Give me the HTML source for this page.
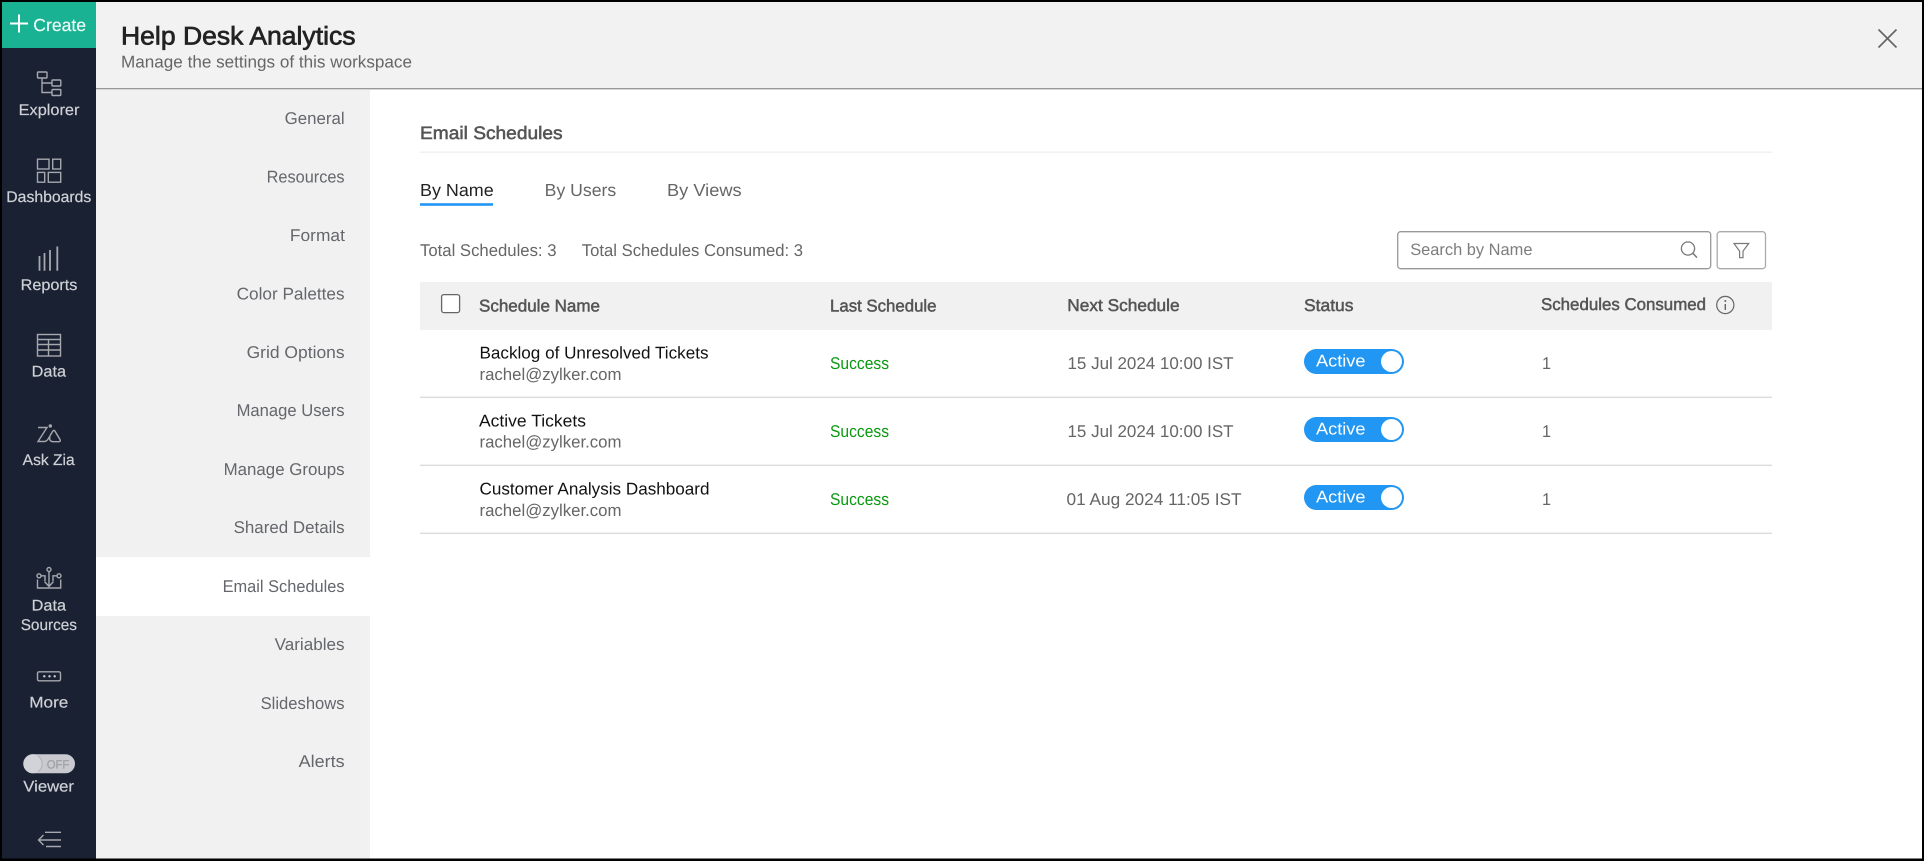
<!DOCTYPE html>
<html lang="en">
<head>
<meta charset="utf-8">
<title>Help Desk Analytics</title>
<style>
html,body{margin:0;padding:0;width:1924px;height:861px;overflow:hidden;background:#000}
svg{display:block;position:absolute;left:0;top:0}
text{font-family:"Liberation Sans",Arial,sans-serif;text-rendering:geometricPrecision;white-space:pre}
.side{font-size:15.5px;fill:#cfd1d5;stroke:#cfd1d5;stroke-width:.2px}
.nav{font-size:17px;fill:#65676c;transform:translate(.6px,-.9px)}
.tx{font-size:17px;fill:#666;transform:translateY(-.9px)}
.hd{font-size:17px;fill:#555;stroke:#555;stroke-width:.5px;transform:translateY(-.7px)}
.nm{font-size:17px;fill:#111;transform:translateY(-.9px)}
.ok{font-size:17px;fill:#0a9a12;transform:translateY(-.9px)}
.ic{fill:none;stroke:#a6a8ae;stroke-width:1.4}
</style>
</head>
<body>
<svg width="1924" height="861" viewBox="0 0 1924 861" xmlns="http://www.w3.org/2000/svg">
  <rect x="0" y="0" width="1924" height="861" fill="#000"/>
  <rect x="2" y="2" width="1920" height="856.5" fill="#fff"/>

  <!-- header -->
  <rect x="96" y="2" width="1826" height="86" fill="#f2f2f2"/>
  <rect x="96" y="88" width="1826" height="1.4" fill="#999"/>
  <text x="121" y="44.5" font-size="25.5" fill="#222" stroke="#222" stroke-width=".7" textLength="234.5" lengthAdjust="spacingAndGlyphs">Help Desk Analytics</text>
  <text x="121" y="67.6" font-size="17" fill="#666" textLength="291" lengthAdjust="spacingAndGlyphs">Manage the settings of this workspace</text>
  <path d="M1878.5 29.5L1896.5 47.5M1896.5 29.5L1878.5 47.5" fill="none" stroke="#666" stroke-width="1.7"/>

  <!-- sidebar -->
  <rect x="2" y="2" width="94" height="856.5" fill="#1a2133"/>
  <rect x="2" y="2" width="94" height="46" fill="#19b394"/>
  <path d="M19 14.5V32.5M10 23.5H28" stroke="#fff" stroke-width="2" fill="none"/>
  <text x="33.3" y="31" font-size="17.5" fill="#f2fbf8" stroke="#f2fbf8" stroke-width=".15" textLength="52.7" lengthAdjust="spacingAndGlyphs">Create</text>

  <g class="ic">
    <!-- explorer -->
    <rect x="37.5" y="72" width="9.5" height="6" rx=".8"/>
    <rect x="52" y="80" width="8.8" height="6" rx=".8"/>
    <rect x="52" y="89.5" width="8.8" height="6" rx=".8"/>
    <path d="M42 78V92.5H52M42 83H52"/>
    <!-- dashboards -->
    <rect x="37.5" y="159.2" width="11.5" height="9.8"/>
    <rect x="52.7" y="159.2" width="8" height="9.8"/>
    <rect x="37.5" y="172.4" width="7.2" height="9.8"/>
    <rect x="48.3" y="172.4" width="12.4" height="9.8"/>
    <!-- reports -->
    <path stroke-width="1.8" d="M39.5 270.7V256M44.5 270.7V253M50 270.7V250M57.3 270.7V246.5"/>
    <!-- data -->
    <rect x="37.5" y="334.5" width="23" height="21.5"/>
    <path d="M37.5 339.5H60.5M37.5 344.5H60.5M37.5 350H60.5M48.5 339.5V356"/>
    <!-- zia -->
    <path d="M38 427.5H47L38 441.5H44.5C46.5 441.5 47.5 440 48.5 438.5L52.5 431.5C53.5 430 54.5 430 55.2 431.5L60 439.5C60.8 441 60 441.7 59 441.7H53C50 441.7 49 439 50 437"/>
    <circle cx="50.3" cy="426" r="1" fill="#a6a8ae"/>
    <!-- data sources -->
    <path d="M37.5 579.5V588H60.7V579.5"/>
    <circle cx="49" cy="569.5" r="2"/>
    <path d="M49 571.5V586.5M44.5 581.5L49 586.5L53.5 581.5"/>
    <circle cx="39" cy="575.8" r="2"/>
    <path d="M41 575.8H45V581"/>
    <circle cx="59" cy="575.8" r="2"/>
    <path d="M57 575.8H53V581"/>
    <!-- more -->
    <rect x="37.5" y="671.8" width="23" height="9" rx="1.5"/>
    <!-- collapse -->
    <path d="M45 832.3H61M38.5 840H61M46 846.5H61M43.5 835L38.5 840L43.5 845"/>
  </g>
  <circle cx="44.3" cy="676.3" r="1.2" fill="#d0d2d6"/>
  <circle cx="49.5" cy="676.3" r="1.2" fill="#d0d2d6"/>
  <circle cx="54.7" cy="676.3" r="1.2" fill="#d0d2d6"/>

  <text class="side" x="18.7" y="115" textLength="60.7" lengthAdjust="spacingAndGlyphs">Explorer</text>
  <text class="side" x="6.3" y="202" textLength="85" lengthAdjust="spacingAndGlyphs">Dashboards</text>
  <text class="side" x="20.7" y="290" textLength="56.7" lengthAdjust="spacingAndGlyphs">Reports</text>
  <text class="side" x="31.7" y="376.5" textLength="34.3" lengthAdjust="spacingAndGlyphs">Data</text>
  <text class="side" x="22.7" y="465" textLength="52" lengthAdjust="spacingAndGlyphs">Ask Zia</text>
  <text class="side" x="31.7" y="610.6" textLength="34.3" lengthAdjust="spacingAndGlyphs">Data</text>
  <text class="side" x="20.7" y="630" textLength="56.3" lengthAdjust="spacingAndGlyphs">Sources</text>
  <text class="side" x="29.3" y="707.6" textLength="39" lengthAdjust="spacingAndGlyphs">More</text>
  <text class="side" x="23.3" y="791.6" textLength="50.7" lengthAdjust="spacingAndGlyphs">Viewer</text>

  <!-- viewer toggle -->
  <rect x="23.3" y="754.3" width="51.7" height="19" rx="9.5" fill="#c8cacf"/>
  <circle cx="32.8" cy="763.8" r="9.5" fill="#d2d3d8"/>
  <path d="M38 756A9.5 9.5 0 0 1 38 771.7" fill="none" stroke="#aeb0b7" stroke-width="1"/>
  <text x="46.7" y="768.3" font-size="12" fill="#9c9ea4" stroke="#9c9ea4" stroke-width=".2" textLength="22.6" lengthAdjust="spacingAndGlyphs">OFF</text>

  <!-- settings nav -->
  <rect x="96" y="89.4" width="274" height="769" fill="#f1f1f1"/>
  <rect x="96" y="557" width="274" height="59" fill="#fff"/>
  <text class="nav" x="284" y="125" textLength="60" lengthAdjust="spacingAndGlyphs">General</text>
  <text class="nav" x="266" y="183.5" textLength="78" lengthAdjust="spacingAndGlyphs">Resources</text>
  <text class="nav" x="289.3" y="242" textLength="55" lengthAdjust="spacingAndGlyphs">Format</text>
  <text class="nav" x="236" y="300.5" textLength="108" lengthAdjust="spacingAndGlyphs">Color Palettes</text>
  <text class="nav" x="246" y="359" textLength="98" lengthAdjust="spacingAndGlyphs">Grid Options</text>
  <text class="nav" x="236" y="417" textLength="108" lengthAdjust="spacingAndGlyphs">Manage Users</text>
  <text class="nav" x="223" y="476" textLength="121" lengthAdjust="spacingAndGlyphs">Manage Groups</text>
  <text class="nav" x="233" y="534" textLength="111" lengthAdjust="spacingAndGlyphs">Shared Details</text>
  <text class="nav" x="222" y="593" textLength="122" lengthAdjust="spacingAndGlyphs">Email Schedules</text>
  <text class="nav" x="274" y="651" textLength="70" lengthAdjust="spacingAndGlyphs">Variables</text>
  <text class="nav" x="260" y="710" textLength="84" lengthAdjust="spacingAndGlyphs">Slideshows</text>
  <text class="nav" x="298" y="768" textLength="46" lengthAdjust="spacingAndGlyphs">Alerts</text>

  <!-- content heading -->
  <text x="420" y="139" font-size="18" fill="#555" stroke="#555" stroke-width=".55" textLength="142.6" lengthAdjust="spacingAndGlyphs">Email Schedules</text>
  <rect x="420" y="151.5" width="1352" height="1.5" fill="#f2f2f2"/>

  <!-- tabs -->
  <text x="420" y="196" font-size="17.5" fill="#222" textLength="73.7" lengthAdjust="spacingAndGlyphs">By Name</text>
  <rect x="420" y="203.2" width="73" height="2.6" fill="#2196f3"/>
  <text x="544.7" y="196" font-size="17.5" fill="#666" textLength="71.5" lengthAdjust="spacingAndGlyphs">By Users</text>
  <text x="667" y="196" font-size="17.5" fill="#666" textLength="74.6" lengthAdjust="spacingAndGlyphs">By Views</text>

  <!-- totals -->
  <text class="tx" x="420" y="256.7" textLength="136.5" lengthAdjust="spacingAndGlyphs">Total Schedules: 3</text>
  <text class="tx" x="581.8" y="256.7" textLength="221.2" lengthAdjust="spacingAndGlyphs">Total Schedules Consumed: 3</text>

  <!-- search / filter -->
  <rect x="1397.7" y="231.7" width="313" height="37" rx="3" fill="#fff" stroke="#999" stroke-width="1.3"/>
  <text x="1410.2" y="255" font-size="16.5" fill="#7d7d7d" textLength="122.3" lengthAdjust="spacingAndGlyphs">Search by Name</text>
  <circle cx="1688" cy="248.5" r="6.6" fill="none" stroke="#777" stroke-width="1.3"/>
  <path d="M1692.8 253.2L1697 257.6" fill="none" stroke="#777" stroke-width="1.5"/>
  <rect x="1717.2" y="231.7" width="48.3" height="37" rx="3" fill="#fff" stroke="#aaa" stroke-width="1.3"/>
  <path d="M1734 243.5H1748.7L1743 251.2V257.7H1739.6V251.2Z" fill="none" stroke="#777" stroke-width="1.2"/>

  <!-- table header -->
  <rect x="420" y="282" width="1352" height="48" fill="#f1f1f1"/>
  <rect x="441.6" y="294.6" width="18" height="18" rx="2.2" fill="#fff" stroke="#666" stroke-width="1.3"/>
  <text class="hd" x="479" y="312" textLength="121" lengthAdjust="spacingAndGlyphs">Schedule Name</text>
  <text class="hd" x="830" y="312" textLength="106.5" lengthAdjust="spacingAndGlyphs">Last Schedule</text>
  <text class="hd" x="1067.3" y="311.7" textLength="112.3" lengthAdjust="spacingAndGlyphs">Next Schedule</text>
  <text class="hd" x="1304" y="311.7" textLength="49.5" lengthAdjust="spacingAndGlyphs">Status</text>
  <text class="hd" x="1541" y="310.7" textLength="165" lengthAdjust="spacingAndGlyphs">Schedules Consumed</text>
  <circle cx="1725.3" cy="305" r="8.6" fill="none" stroke="#666" stroke-width="1.2"/>
  <circle cx="1725.3" cy="301" r="1" fill="#666"/>
  <path d="M1725.3 304V310" stroke="#666" stroke-width="1.4" fill="none"/>

  <!-- row 1 -->
  <text class="nm" x="479.5" y="359.3" textLength="229" lengthAdjust="spacingAndGlyphs">Backlog of Unresolved Tickets</text>
  <text class="tx" x="479.5" y="380.7" textLength="142" lengthAdjust="spacingAndGlyphs">rachel@zylker.com</text>
  <text class="ok" x="830" y="370" textLength="59" lengthAdjust="spacingAndGlyphs">Success</text>
  <text class="tx" x="1067.5" y="370" textLength="166" lengthAdjust="spacingAndGlyphs">15 Jul 2024 10:00 IST</text>
  <rect x="1304" y="349" width="100" height="25" rx="12.5" fill="#2196f3"/>
  <circle cx="1391.5" cy="361.5" r="10.5" fill="#fff"/>
  <text x="1316" y="366.7" font-size="17" fill="#fff" textLength="49.5" lengthAdjust="spacingAndGlyphs">Active</text>
  <text class="tx" x="1542" y="370" textLength="9" lengthAdjust="spacingAndGlyphs">1</text>
  <rect x="420" y="396.6" width="1352" height="1.5" fill="#ddd"/>

  <!-- row 2 -->
  <text class="nm" x="479" y="427.3" textLength="107" lengthAdjust="spacingAndGlyphs">Active Tickets</text>
  <text class="tx" x="479.5" y="448.3" textLength="142" lengthAdjust="spacingAndGlyphs">rachel@zylker.com</text>
  <text class="ok" x="830" y="438" textLength="59" lengthAdjust="spacingAndGlyphs">Success</text>
  <text class="tx" x="1067.5" y="438" textLength="166" lengthAdjust="spacingAndGlyphs">15 Jul 2024 10:00 IST</text>
  <rect x="1304" y="417" width="100" height="25" rx="12.5" fill="#2196f3"/>
  <circle cx="1391.5" cy="429.5" r="10.5" fill="#fff"/>
  <text x="1316" y="434.7" font-size="17" fill="#fff" textLength="49.5" lengthAdjust="spacingAndGlyphs">Active</text>
  <text class="tx" x="1542" y="438" textLength="9" lengthAdjust="spacingAndGlyphs">1</text>
  <rect x="420" y="464.6" width="1352" height="1.5" fill="#ddd"/>

  <!-- row 3 -->
  <text class="nm" x="479.5" y="495.3" textLength="230" lengthAdjust="spacingAndGlyphs">Customer Analysis Dashboard</text>
  <text class="tx" x="479.5" y="516.7" textLength="142" lengthAdjust="spacingAndGlyphs">rachel@zylker.com</text>
  <text class="ok" x="830" y="506" textLength="59" lengthAdjust="spacingAndGlyphs">Success</text>
  <text class="tx" x="1066.5" y="506" textLength="175" lengthAdjust="spacingAndGlyphs">01 Aug 2024 11:05 IST</text>
  <rect x="1304" y="485" width="100" height="25" rx="12.5" fill="#2196f3"/>
  <circle cx="1391.5" cy="497.5" r="10.5" fill="#fff"/>
  <text x="1316" y="502.7" font-size="17" fill="#fff" textLength="49.5" lengthAdjust="spacingAndGlyphs">Active</text>
  <text class="tx" x="1542" y="506" textLength="9" lengthAdjust="spacingAndGlyphs">1</text>
  <rect x="420" y="532.6" width="1352" height="1.5" fill="#ddd"/>
</svg>
</body>
</html>
